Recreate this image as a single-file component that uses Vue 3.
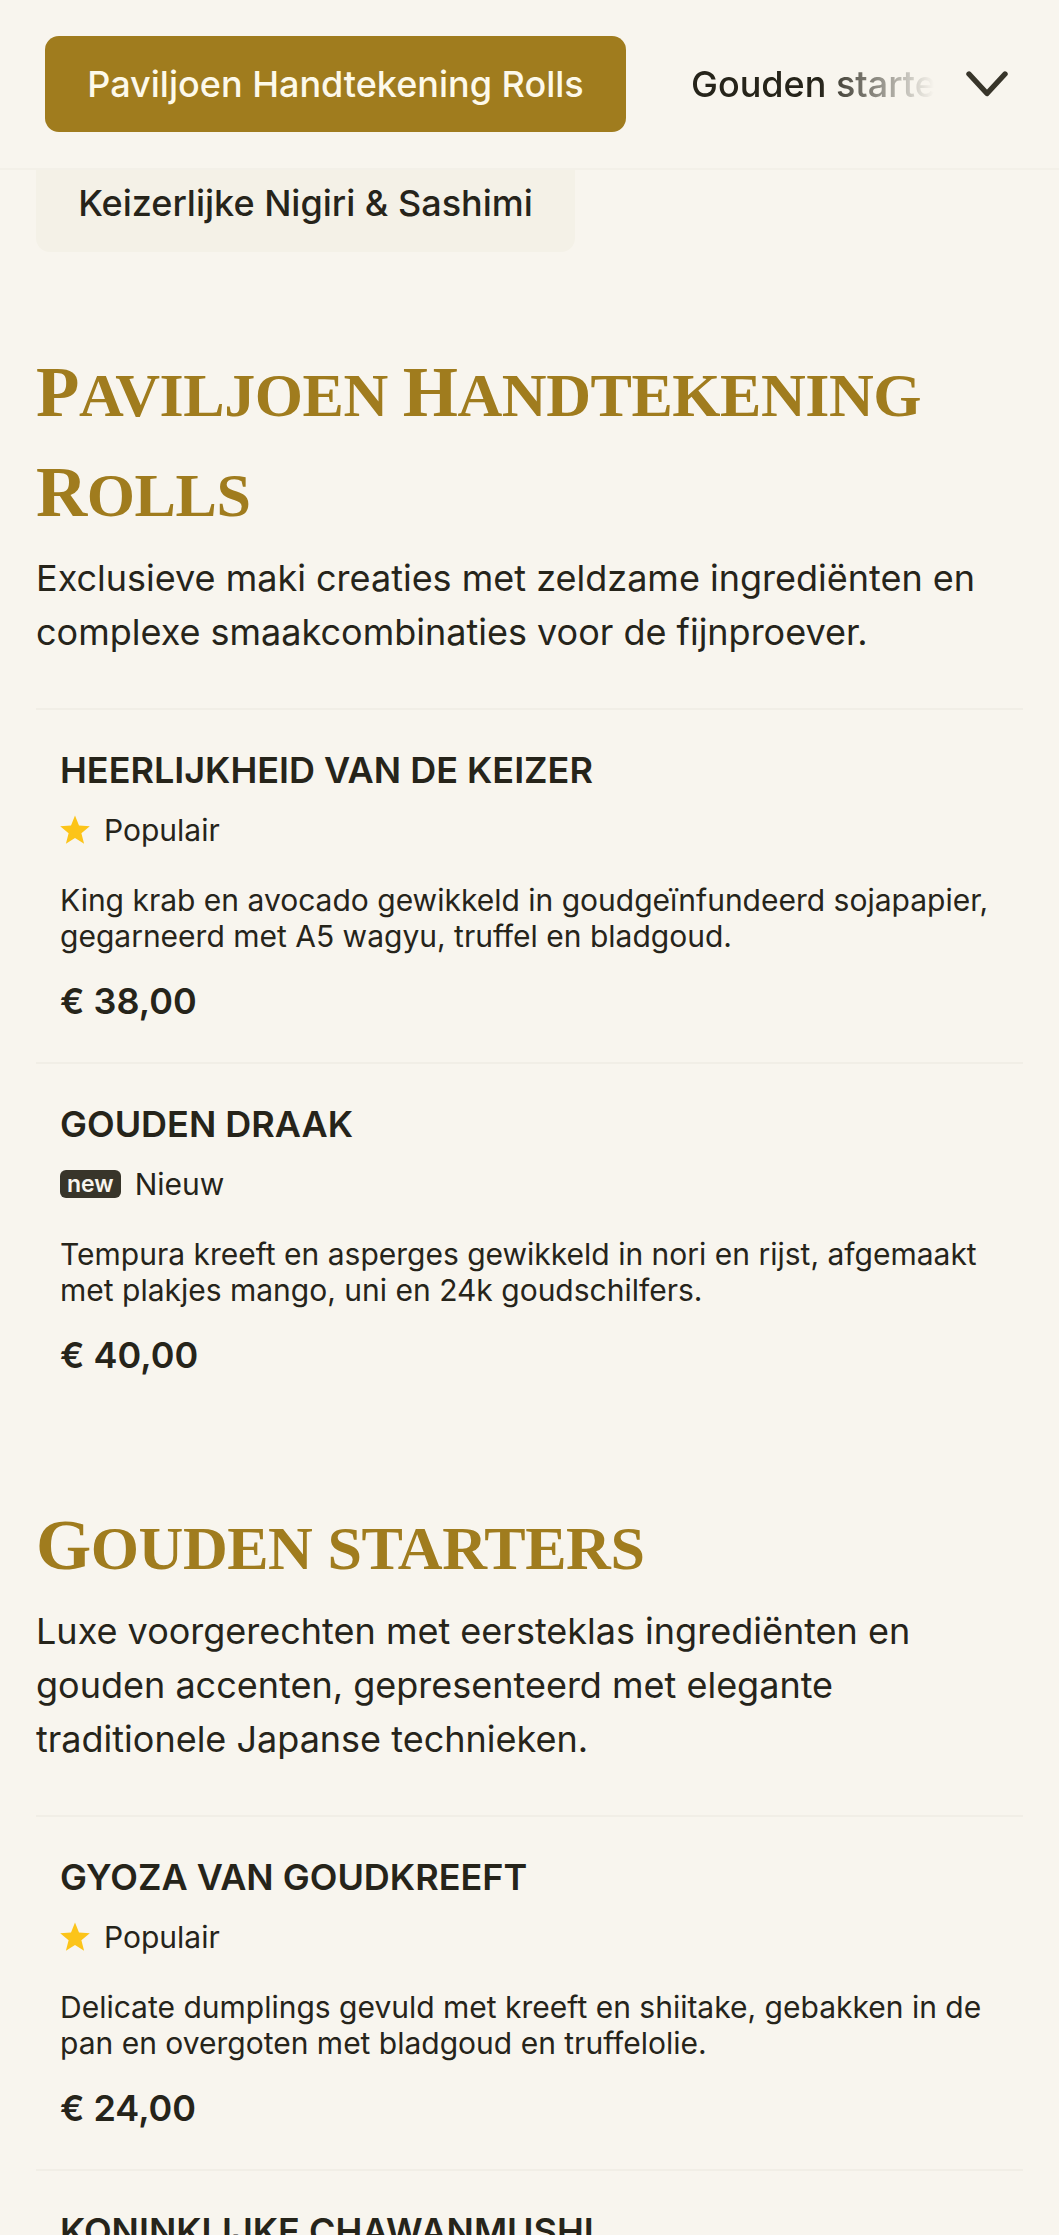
<script setup>
const split = (t) => t.split(/([A-Z])/).filter(Boolean).map((c) => ({ c, cap: /^[A-Z]$/.test(c) }))
const sections = [
  {
    title: 'Paviljoen Handtekening Rolls',
    desc: 'Exclusieve maki creaties met zeldzame ingrediënten en complexe smaakcombinaties voor de fijnproever.',
    items: [
      { name: 'HEERLIJKHEID VAN DE KEIZER', tag: 'Populair', kind: 'star', desc: 'King krab en avocado gewikkeld in goudgeïnfundeerd sojapapier, gegarneerd met A5 wagyu, truffel en bladgoud.', price: '€ 38,00' },
      { name: 'GOUDEN DRAAK', tag: 'Nieuw', kind: 'new', desc: 'Tempura kreeft en asperges gewikkeld in nori en rijst, afgemaakt met plakjes mango, uni en 24k goudschilfers.', price: '€ 40,00' }
    ]
  },
  {
    title: 'Gouden starters',
    desc: 'Luxe voorgerechten met eersteklas ingrediënten en gouden accenten, gepresenteerd met elegante traditionele Japanse technieken.',
    items: [
      { name: 'GYOZA VAN GOUDKREEFT', tag: 'Populair', kind: 'star', desc: 'Delicate dumplings gevuld met kreeft en shiitake, gebakken in de pan en overgoten met bladgoud en truffelolie.', price: '€ 24,00' },
      { name: 'KONINKLIJKE CHAWANMUSHI', tag: '', kind: '', desc: '', price: '' }
    ]
  }
]
</script>

<template>
  <div class="page">
    <header class="topbar">
      <button class="tab active">Paviljoen Handtekening Rolls</button>
      <div class="rest">
        <span class="fade">Gouden starters</span>
      </div>
      <svg class="chev" viewBox="0 0 42 28" width="42" height="28" fill="none">
        <path d="M3 4 L21 23.5 L39 4" stroke="#38352a" stroke-width="5.4" stroke-linecap="round" stroke-linejoin="round" />
      </svg>
    </header>
    <div class="second-tab"><span>Keizerlijke Nigiri &amp; Sashimi</span></div>

    <section v-for="s in sections" :key="s.title" class="section">
      <h2><template v-for="(p, i) in split(s.title)" :key="i"><span v-if="p.cap" class="cap">{{ p.c }}</span><template v-else>{{ p.c }}</template></template></h2>
      <p class="lead">{{ s.desc }}</p>
      <article v-for="it in s.items" :key="it.name" class="item">
        <h3>{{ it.name }}</h3>
        <div v-if="it.tag" class="tag">
          <svg v-if="it.kind === 'star'" class="star" viewBox="0 0 30 30" width="30" height="30">
            <path d="M15 0.5 L19 10.6 L29.8 11.3 L21.4 18.2 L24.1 28.8 L15 23 L5.9 28.8 L8.6 18.2 L0.2 11.3 L11 10.6 Z" fill="#fcc419" />
          </svg>
          <span v-else class="new">new</span>
          <span>{{ it.tag }}</span>
        </div>
        <p v-if="it.desc" class="text">{{ it.desc }}</p>
        <div v-if="it.price" class="price">{{ it.price }}</div>
      </article>
    </section>
  </div>
</template>

<style>
html, body { margin: 0; background: #f8f5ee; overflow: hidden; }
</style>

<style scoped>
.page {
  height: 2235px;
  overflow: hidden;
  background: #f8f5ee;
  color: #26241a;
  font-family: Inter, "Liberation Sans", sans-serif;
}
.topbar {
  position: relative;
  z-index: 2;
  box-sizing: border-box;
  height: 170px;
  display: flex;
  align-items: center;
  padding: 0 45px;
  background: #f8f5ee;
  border-bottom: 2px solid #f3f0e8;
}
.tab {
  flex: none;
  box-sizing: border-box;
  width: 581px;
  height: 96px;
  border: 0;
  border-radius: 14px;
  font: 500 36px/1 Inter, sans-serif;
  background: #a07c1e;
  color: #fdf9ea;
  padding: 0;
}
.rest {
  flex: none;
  box-sizing: border-box;
  width: 271px;
  margin-left: 37px;
  padding-left: 28px;
  overflow: hidden;
  white-space: nowrap;
  font-size: 36px;
  font-weight: 500;
  -webkit-mask-image: linear-gradient(90deg, #000 58%, transparent 100%);
  mask-image: linear-gradient(90deg, #000 58%, transparent 100%);
}
.chev { flex: none; margin-left: 32px; }
.second-tab {
  box-sizing: border-box;
  width: 539px;
  height: 96px;
  margin: -14px 0 0 36px;
  padding-bottom: 2px;
  border-radius: 14px;
  background: #f4f1e7;
  font-size: 36px;
  font-weight: 500;
  display: flex;
  align-items: center;
  justify-content: center;
}
.section { padding: 0 36px; margin-bottom: 82px; }
.section:first-of-type { margin-top: 93px; }
h2 {
  margin: 0;
  font-family: "Liberation Serif", serif;
  text-transform: uppercase;
  font-weight: 700;
  font-size: 62px;
  line-height: 100px;
  letter-spacing: -0.45px;
  color: #a07c1e;
}
.cap { font-size: 71px; line-height: 1; }
.lead {
  margin: 6px 0 0;
  font-size: 36px;
  line-height: 54px;
  padding-bottom: 49px;
  border-bottom: 2px solid #f1eee6;
}
.item { padding: 38px 24px 38px; border-bottom: 2px solid #f1eee6; }
.item:last-child { border-bottom: 0; }
h3 { margin: 0; font-size: 36px; line-height: 44px; font-weight: 600; }
.tag {
  display: flex;
  align-items: center;
  gap: 14px;
  margin-top: 18px;
  height: 40px;
  font-size: 30px;
}
.star { flex: none; }
.new {
  background: #38352a;
  color: #f8f5ee;
  border-radius: 6px;
  font-size: 23px;
  font-weight: 600;
  line-height: 28px;
  padding: 0 7px;
}
.text { margin: 32px 0 0; font-size: 30px; line-height: 36px; }
.price { margin-top: 24px; font-size: 36px; line-height: 46px; font-weight: 600; }
</style>
